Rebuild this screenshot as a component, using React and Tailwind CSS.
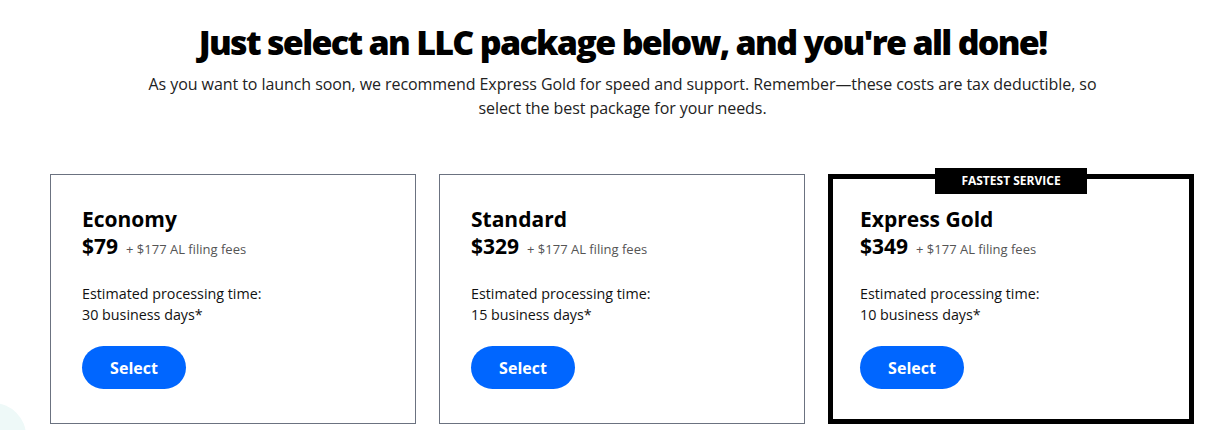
import React from "react";

const plans = [
  { name: "Economy", price: "$79", days: "30 business days*" },
  { name: "Standard", price: "$329", days: "15 business days*" },
  { name: "Express Gold", price: "$349", days: "10 business days*", featured: true },
];

function Card({ plan }) {
  return (
    <div
      className={
        "relative h-[250px] w-[366px] bg-white " +
        (plan.featured ? "border-[5px] border-black pl-[27px] pt-[26px]" : "border border-[#6b7280] pl-[31px] pt-[30px]")
      }
    >
      {plan.featured && (
        <div className="absolute left-1/2 top-[-11px] flex h-[26px] w-[152px] -translate-x-1/2 items-center justify-center bg-black text-[12px] font-bold text-white">
          FASTEST SERVICE
        </div>
      )}
      <div className="text-[21px] font-bold leading-[28px] text-black">{plan.name}</div>
      <div className="flex items-baseline leading-[26px]">
        <span className="text-[21px] font-bold text-black">{plan.price}</span>
        <span className="ml-[8px] text-[13px] text-[#555]">+ $177 AL filing fees</span>
      </div>
      <div className="mt-[21px] text-[14.3px] leading-[21px] text-[#111]">
        <div>Estimated processing time:</div>
        <div>{plan.days}</div>
      </div>
      <button className="mt-[21px] flex h-[43px] w-[104px] items-center justify-center rounded-full bg-[#0066ff] text-[16px] font-bold text-white">
        Select
      </button>
    </div>
  );
}

export default function App() {
  return (
    <div
      className="relative h-[430px] w-[1225px] overflow-hidden bg-white"
      style={{ fontFamily: '"Open Sans", "Noto Sans", sans-serif' }}
    >
      <div className="absolute left-[-40px] top-[403px] h-[66px] w-[66px] rounded-full bg-[#eef9f8]" />
      <div className="relative ml-[50px] flex w-[1145px] flex-col items-center">
        <h1 className="mt-[19px] text-[34px] font-extrabold leading-[46px] tracking-[-1.7px] text-black">
          Just select an LLC package below, and you're all done!
        </h1>
        <p className="mt-[7px] text-center text-[16px] leading-[24px] tracking-[-0.07px] text-[#222]">
          As you want to launch soon, we recommend Express Gold for speed and support. Remember—these costs are tax deductible, so
          <br />
          select the best package for your needs.
        </p>
        <div className="mt-[54px] flex w-full gap-[23px]">
          {plans.map((p) => (
            <Card key={p.name} plan={p} />
          ))}
        </div>
      </div>
    </div>
  );
}
